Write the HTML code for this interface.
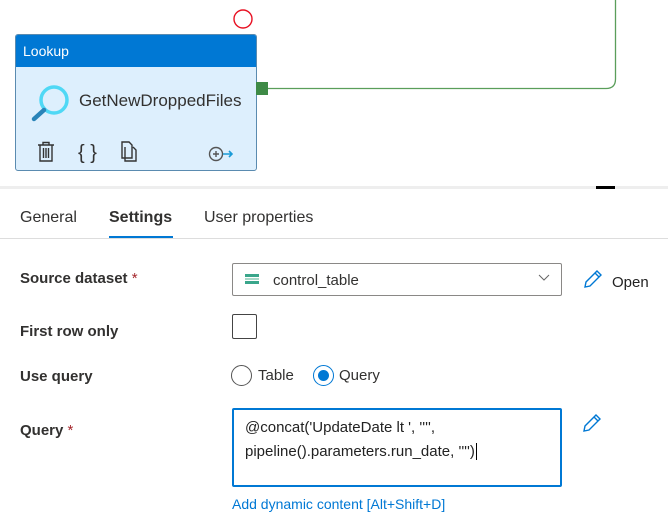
<!DOCTYPE html>
<html><head><style>
body{margin:0;width:668px;height:520px;background:#fff;position:relative;overflow:hidden;font-family:"Liberation Sans",sans-serif;color:#323130}
.a{position:absolute}
.lbl{font-size:15px;font-weight:bold;color:#323130}
.req{color:#a4262c;font-weight:normal}
</style></head><body>
<svg class="a" style="left:0;top:0" width="668" height="186">
<path d="M262 88.5 H606 Q615.5 88.5 615.5 79 V0" fill="none" stroke="#5a9e5a" stroke-width="1.3"/>
<circle cx="243" cy="19" r="9" fill="none" stroke="#e81123" stroke-width="1.4"/>
</svg>
<div class="a" style="left:15px;top:34px;width:240px;height:135px;border:1px solid #5a8bb0;border-radius:3px;background:#ddeffd;overflow:hidden">
<div style="height:32px;background:#0078d4;color:#fff;font-size:14px;line-height:33px;padding-left:7px">Lookup</div>
<svg class="a" style="left:14px;top:48px" width="40" height="40"><circle cx="24" cy="17" r="13" fill="none" stroke="#4fd8f5" stroke-width="3.5"/><line x1="14" y1="27" x2="4" y2="36" stroke="#2a84b8" stroke-width="4.5" stroke-linecap="round"/></svg>
<div class="a" style="left:63px;top:56px;font-size:17px;color:#323130">GetNewDroppedFiles</div>
<svg class="a" style="left:20px;top:105px" width="200" height="26" fill="none" stroke="#333" stroke-width="1.4">
<path d="M2 5h16M7 5V2.5h6V5M4 5v16h12V5M7.5 8v10M10 8v10M12.5 8v10"/>
<text x="42" y="19" font-size="20" fill="#333" stroke="none" font-family="Liberation Sans">{ }</text>
<path d="M86 2h7l3 3v13h-10zM89 7v14h11V10l-3-3"/>
<circle cx="180" cy="14" r="6.5" stroke="#555"/><path d="M177 14h6M180 11v6" stroke="#555"/><path d="M187 14h9M193 11l3 3-3 3" stroke="#1a9bd7" stroke-width="1.6"/>
</svg>
</div>
<div class="a" style="left:256px;top:82px;width:12px;height:13px;background:#3e8a46"></div>
<div class="a" style="left:0;top:186px;width:668px;height:3px;background:#eeeeee"></div>
<div class="a" style="left:596px;top:186px;width:19px;height:3px;background:#000"></div>
<div class="a" style="left:20px;top:209px;font-size:16px">General</div>
<div class="a" style="left:109px;top:209px;font-size:16px;font-weight:bold">Settings</div>
<div class="a" style="left:204px;top:209px;font-size:16px">User properties</div>
<div class="a" style="left:109px;top:236px;width:64px;height:3px;background:#0078d4"></div>
<div class="a" style="left:0;top:238px;width:668px;height:1px;background:#ddd"></div>
<div class="a lbl" style="left:20px;top:270px">Source dataset <span class="req">*</span></div>
<div class="a" style="left:232px;top:263px;width:328px;height:31px;border:1px solid #8a8886;border-radius:2px"></div>
<svg class="a" style="left:245px;top:274px" width="16" height="10"><rect width="14" height="3" fill="#3aa68b"/><rect y="4" width="14" height="2" fill="#a8d8c8"/><rect y="7" width="14" height="3" fill="#3aa68b"/></svg>
<div class="a" style="left:273px;top:272px;font-size:15px">control_table</div>
<svg class="a" style="left:538px;top:274px" width="12" height="8"><path d="M1 1l5 5 5-5" fill="none" stroke="#666" stroke-width="1"/></svg>
<svg class="a" style="left:582px;top:268px" width="22" height="22"><path d="M3 19l1-5L15 3l4 4L8 18z M13 5l4 4" fill="none" stroke="#0078d4" stroke-width="1.4"/></svg>
<div class="a" style="left:612px;top:274px;font-size:15px;color:#222">Open</div>
<div class="a lbl" style="left:20px;top:323px">First row only</div>
<div class="a" style="left:232px;top:314px;width:23px;height:23px;border:1px solid #444;border-radius:2px"></div>
<div class="a lbl" style="left:20px;top:368px">Use query</div>
<div class="a" style="left:231px;top:365px;width:19px;height:19px;border:1px solid #555;border-radius:50%"></div>
<div class="a" style="left:258px;top:367px;font-size:15px">Table</div>
<div class="a" style="left:313px;top:365px;width:19px;height:19px;border:1px solid #0078d4;border-radius:50%"></div>
<div class="a" style="left:318px;top:370px;width:11px;height:11px;background:#0078d4;border-radius:50%"></div>
<div class="a" style="left:339px;top:367px;font-size:15px">Query</div>
<div class="a lbl" style="left:20px;top:422px">Query <span class="req">*</span></div>
<div class="a" style="left:232px;top:408px;width:326px;height:75px;border:2px solid #0078d4;border-radius:2px"></div>
<div class="a" style="left:245px;top:416px;font-size:15px;line-height:24px;color:#222">@concat('UpdateDate lt ', '''',<br>pipeline().parameters.run_date, '''')<span style="border-left:1px solid #000;margin-left:1px"></span></div>
<svg class="a" style="left:581px;top:412px" width="22" height="22"><path d="M3 19l1-5L15 3l4 4L8 18z M13 5l4 4" fill="none" stroke="#0078d4" stroke-width="1.4"/></svg>
<div class="a" style="left:232px;top:496px;font-size:14px;color:#0078d4">Add dynamic content [Alt+Shift+D]</div>
</body></html>
